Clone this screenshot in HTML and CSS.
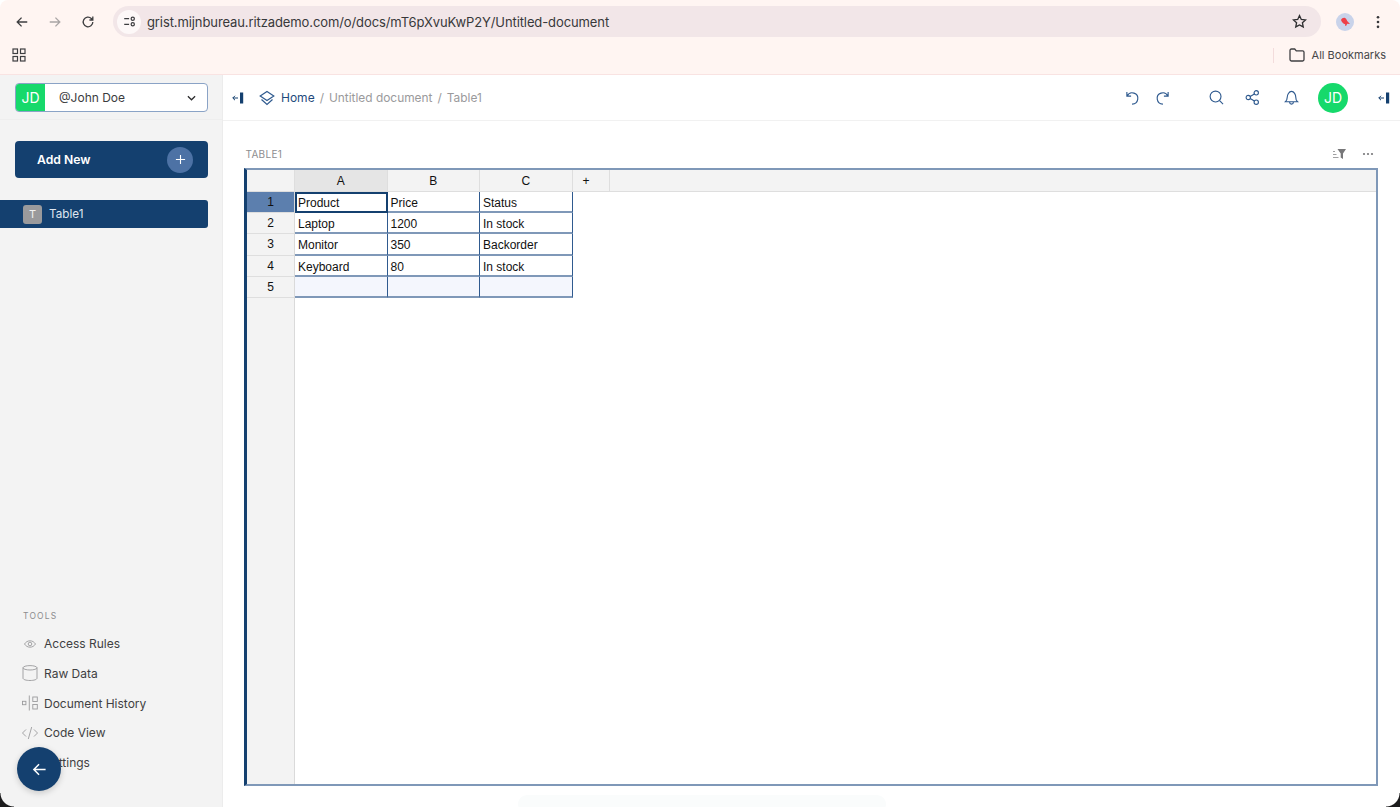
FILE: index.html
```html
<!DOCTYPE html>
<html lang="en">
<head>
<meta charset="utf-8">
<title>Untitled document - Grist</title>
<link rel="stylesheet" href="styles.css">
</head>
<body>
<div class="window">
  <header class="chrome">
    <div class="toolbar">
      <div class="nav">
        <svg class="nav-icon" viewBox="0 0 16 16"><path d="M14 8H2.500M7.500 3 2.500 8l5 5"/></svg>
        <svg class="nav-icon faded" viewBox="0 0 16 16"><path d="M2 8h11.500M8.500 3l5 5-5 5"/></svg>
        <svg class="nav-icon" viewBox="0 0 16 16"><path d="M13.500 8A5.500 5.500 0 1 1 11.800 4L13.500 5.700M13.500 1.800v3.900H9.600"/></svg>
      </div>
      <div class="omnibox">
        <span class="site-chip">
          <svg viewBox="0 0 16 16"><path d="M1.500 4.500h6M1.500 11.500h6"/><circle cx="12" cy="4.500" r="2"/><circle cx="12" cy="11.500" r="2"/></svg>
        </span>
        <span class="url">grist.mijnbureau.ritzademo.com/o/docs/mT6pXvuKwP2Y/Untitled-document</span>
        <svg class="star" viewBox="0 0 16 16"><path d="M8 1.700l1.900 4.100 4.500.5-3.300 3 .9 4.500L8 11.600l-4 2.200.9-4.500-3.300-3 4.500-.5z"/></svg>
      </div>
      <span class="profile">
        <svg viewBox="0 0 18 18"><path d="M5 7c.8-1.700 2.400-2.500 4-2 1.300.4 1.600 1.800 2.200 2.900L14 11l-2.800-.3-1 2H9l.2-1.500C7.300 11 5.700 9 5 7z"/></svg>
      </span>
      <svg class="kebab" viewBox="0 0 4 16"><circle cx="2" cy="2.500" r="1.500"/><circle cx="2" cy="8" r="1.500"/><circle cx="2" cy="13.500" r="1.500"/></svg>
    </div>
    <div class="bookmarks">
      <svg class="apps" viewBox="0 0 14 14"><rect x="1" y="1" width="4.500" height="4.500"/><rect x="8.500" y="1" width="4.500" height="4.500"/><rect x="1" y="8.500" width="4.500" height="4.500"/><rect x="8.500" y="8.500" width="4.500" height="4.500"/></svg>
      <span class="bm-divider"></span>
      <svg class="folder" viewBox="0 0 16 14"><path d="M1 2.500C1 1.700 1.600 1 2.400 1h3.300l1.600 1.900h6.300c.8 0 1.400.6 1.400 1.400v7.300c0 .8-.6 1.400-1.400 1.400H2.400c-.8 0-1.400-.6-1.400-1.400z"/></svg>
      <span class="bm-label">All Bookmarks</span>
    </div>
  </header>

  <div class="app">
    <aside class="sidebar">
      <div class="account-bar">
        <div class="account">
          <span class="account-badge">JD</span>
          <span class="account-name">@John Doe</span>
          <svg class="caret" viewBox="0 0 10 6"><path d="M1 1l4 4 4-4"/></svg>
        </div>
      </div>
      <button class="add-new">
        <span>Add New</span>
        <span class="add-plus"><svg viewBox="0 0 12 12"><path d="M6 1v10M1 6h10"/></svg></span>
      </button>
      <div class="page-item">
        <span class="page-badge">T</span>
        <span>Table1</span>
      </div>
      <div class="tools">
        <div class="tools-title">TOOLS</div>
        <div class="tool">
          <svg viewBox="0 0 16 16"><path d="M2.500 8C3.800 6 5.700 4.800 8 4.800s4.200 1.200 5.500 3.200c-1.300 2-3.200 3.200-5.500 3.200S3.800 10 2.500 8z"/><circle cx="8" cy="8" r="1.800"/></svg>
          <span>Access Rules</span>
        </div>
        <div class="tool">
          <svg viewBox="0 0 16 16"><ellipse cx="8" cy="2.800" rx="7" ry="2.200"/><path d="M1 2.800v10.400c0 1.300 3 2.300 7 2.300s7-1 7-2.300V2.800"/></svg>
          <span>Raw Data</span>
        </div>
        <div class="tool">
          <svg viewBox="0 0 16 16"><rect x=".5" y="6.300" width="3.400" height="3.400"/><rect x="10.800" y="2" width="4.500" height="4.500"/><rect x="10.800" y="9.500" width="4.500" height="4.500"/><path d="M7.300 .5v15"/></svg>
          <span>Document History</span>
        </div>
        <div class="tool">
          <svg viewBox="0 0 16 16"><path d="M4 4.500.5 8 4 11.500M12 4.500 15.500 8 12 11.500M9.700 2 6.300 14"/></svg>
          <span>Code View</span>
        </div>
        <div class="tool">
          <svg viewBox="0 0 16 16"><circle cx="8" cy="8" r="5"/></svg>
          <span>Settings</span>
        </div>
      </div>
    </aside>

    <main class="content">
      <div class="topbar">
        <svg class="collapse" viewBox="0 0 12 12"><path class="thin" d="M6 6H.8M3 3.800.8 6 3 8.200"/><rect x="8" y="0.500" width="3.200" height="11"/></svg>
        <svg class="layers" viewBox="0 0 16 16"><path d="M8 1.500 14.800 6 8 10.500 1.200 6z"/><path d="M2.500 9.500 8 14.500l5.500-5"/></svg>
        <span class="crumb-home">Home</span>
        <span class="crumb-sep">/</span>
        <span class="crumb">Untitled document</span>
        <span class="crumb-sep">/</span>
        <span class="crumb">Table1</span>
        <div class="actions">
          <svg class="action undo" viewBox="0 0 16 16"><path d="M2 2v4.500h4.500M2.300 6.300A6 6 0 1 1 7.500 15"/></svg>
          <svg class="action redo" viewBox="0 0 16 16"><path d="M14 2v4.500H9.500M13.700 6.300A6 6 0 1 0 8.500 15"/></svg>
          <svg class="action search" viewBox="0 0 16 16"><circle cx="7" cy="7" r="5.800"/><path d="M11.300 11.300 15 15"/></svg>
          <svg class="action share" viewBox="0 0 16 16"><circle cx="3.500" cy="8" r="2.300"/><circle cx="12" cy="3" r="2.300"/><circle cx="12" cy="13" r="2.300"/><path d="M5.500 6.900 10 4.200M5.500 9.100l4.500 2.700"/></svg>
          <svg class="action bell" viewBox="0 0 16 16"><path d="M1.500 12.500c1-1 1.900-2 1.900-4.500S5.300 1.500 8 1.500 12.600 5 12.600 8s.9 3.500 1.900 4.500zM6 13c0 2.700 4 2.700 4 0"/></svg>
          <span class="avatar">JD</span>
          <svg class="collapse right" viewBox="0 0 12 12"><path class="thin" d="M6 6H.8M3 3.800.8 6 3 8.200"/><rect x="8" y="0.500" width="3.200" height="11"/></svg>
        </div>
      </div>

      <section class="widget">
        <div class="widget-head">
          <span class="widget-title">TABLE1</span>
          <svg class="sort-filter" viewBox="0 0 14 12"><path class="lines" d="M1 3.500h2M1 6.500h3.500M1 9.500h5.500"/><path class="fill" d="M5.500 1H14L11 5.500V11L8.700 9.500v-4z"/></svg>
          <svg class="dots" viewBox="0 0 12 4"><circle cx="2" cy="2" r="1.100"/><circle cx="6" cy="2" r="1.100"/><circle cx="10" cy="2" r="1.100"/></svg>
        </div>
        <div class="grid-frame">
          <div class="grid-head">
            <span class="corner"></span>
            <span class="col selected">A</span>
            <span class="col">B</span>
            <span class="col">C</span>
            <span class="col plus">+</span>
            <span class="col-rest"></span>
          </div>
          <div class="grid-body">
            <div class="row-heads">
              <span class="row-num active">1</span>
              <span class="row-num">2</span>
              <span class="row-num">3</span>
              <span class="row-num">4</span>
              <span class="row-num">5</span>
            </div>
            <div class="cells">
              <span class="cell cursor">Product</span><span class="cell">Price</span><span class="cell">Status</span>
              <span class="cell">Laptop</span><span class="cell">1200</span><span class="cell">In stock</span>
              <span class="cell">Monitor</span><span class="cell">350</span><span class="cell">Backorder</span>
              <span class="cell">Keyboard</span><span class="cell">80</span><span class="cell">In stock</span>
              <span class="cell new"></span><span class="cell new"></span><span class="cell new"></span>
            </div>
          </div>
        </div>
      </section>
    </main>
  </div>

  <button class="fab"><svg viewBox="0 0 16 16"><path d="M14.500 8H2M7.500 2.500 2 8l5.500 5.500"/></svg></button>
  <span class="bottom-glow"></span>
  <span class="round bl"></span>
  <span class="round br"></span>
</div>
</body>
</html>
```
FILE: styles.css
```css
* { box-sizing: border-box; }
html, body { margin: 0; height: 100%; background: #fff; }
body { font-family: Inter, "Liberation Sans", sans-serif; overflow: hidden; }
svg { display: block; flex: none; fill: none; }

.window { position: relative; width: 1400px; height: 807px; overflow: hidden; display: flex; flex-direction: column; }

/* Browser chrome */
.chrome { height: 75px; flex: none; background: #fff5f2; border-bottom: 1px solid #f9e3e2; border-radius: 8px 8px 0 0; }
.toolbar { height: 43px; display: flex; align-items: center; padding: 0 14px 0 15px; }
.nav { display: flex; gap: 19px; width: 98px; flex: none; align-items: center; }
.nav-icon { width: 14px; height: 14px; stroke: #3e3e40; stroke-width: 1.5; }
.nav-icon.faded { stroke: #a9a5a5; }
.omnibox { flex: none; width: 1208px; height: 31px; border-radius: 16px; background: #f2e6e8; display: flex; align-items: center; padding-left: 4px; padding-right: 14px; }
.site-chip { width: 24px; height: 24px; border-radius: 50%; background: #fdf8f8; display: flex; align-items: center; justify-content: center; flex: none; }
.site-chip svg { width: 13px; height: 13px; stroke: #3d3d40; stroke-width: 1.5; }
.url { margin-left: 6px; font-size: 13px; color: #38383a; letter-spacing: -0.1px; white-space: nowrap; }
.star { width: 15px; height: 15px; margin-left: auto; stroke: #2f2f31; stroke-width: 1.4; }
.profile { width: 18px; height: 18px; border-radius: 50%; background: #c9d3ea; margin-left: 15px; flex: none; }
.profile svg { width: 18px; height: 18px; fill: #ee3f47; }
.kebab { width: 4px; height: 14px; margin-left: 22px; fill: #37373a; }

.bookmarks { height: 31px; display: flex; align-items: center; padding: 0 14px 7px 12px; }
.apps { width: 14px; height: 14px; stroke: #3f3f42; stroke-width: 1.2; }
.bm-divider { width: 1px; height: 15px; background: #f3dcdc; margin-left: auto; }
.folder { width: 16px; height: 14px; margin-left: 15px; stroke: #3f3f42; stroke-width: 1.3; }
.bm-label { margin-left: 7px; font-size: 11px; color: #474749; white-space: nowrap; }

/* App */
.app { flex: 1; display: flex; min-height: 0; }
.sidebar { width: 223px; flex: none; background: #f3f3f3; border-right: 1px solid #ececec; display: flex; flex-direction: column; }
.account-bar { height: 45px; flex: none; padding: 8px 15px 0; border-bottom: 1px solid #eeeeee; }
.account { width: 193px; height: 29px; background: #fff; border: 1px solid #8aa3c6; border-radius: 4px; display: flex; align-items: center; overflow: hidden; }
.account-badge { width: 29px; height: 100%; background: #16d96b; color: #fff; font-size: 14px; display: flex; align-items: center; justify-content: center; flex: none; }
.account-name { margin-left: 14px; font-size: 12px; color: #3b3b3e; }
.caret { width: 9px; height: 6px; margin-left: auto; margin-right: 11px; stroke: #2c2c2e; stroke-width: 1.4; }

.add-new { margin: 21px 15px 0; width: 193px; height: 37px; flex: none; background: #14406f; border: 0; border-radius: 4px; color: #fff; font: 600 12.200px Inter, sans-serif; display: flex; align-items: center; justify-content: space-between; padding: 0 15px 0 22px; }
.add-plus { width: 26px; height: 26px; border-radius: 50%; background: #4d72a5; display: flex; align-items: center; justify-content: center; }
.add-plus svg { width: 11px; height: 11px; stroke: #fff; stroke-width: 1.2; }

.page-item { margin-top: 22px; width: 208px; height: 28px; flex: none; background: #14406f; border-radius: 0 3px 3px 0; color: #dfe6ef; font-size: 11.700px; display: flex; align-items: center; padding-left: 23px; gap: 7px; }
.page-badge { width: 19px; height: 19px; border-radius: 3px; background: #9a9a9c; color: #f1f1f1; display: flex; align-items: center; justify-content: center; font-size: 11px; }

.tools { margin-top: auto; padding: 0 0 30px 22px; }
.tools-title { font-size: 8.500px; letter-spacing: 0.14em; color: #8c8c8e; height: 15px; margin: 0 0 6px 1px; display: flex; align-items: center; }
.tool { height: 29.600px; display: flex; align-items: center; gap: 6px; font-size: 12px; color: #3f3f42; }
.tool svg { width: 16px; height: 16px; stroke: #9b9b9d; stroke-width: 0.9; }

.content { flex: 1; min-width: 0; display: flex; flex-direction: column; background: #fff; }
.topbar { height: 46px; flex: none; border-bottom: 1px solid #f1f1f1; display: flex; align-items: center; padding: 0 10px 0 9px; }
.collapse { width: 12px; height: 12px; fill: #14406f; }
.collapse .thin { fill: none; stroke: #14406f; stroke-width: 1; }
.layers { width: 16px; height: 16px; margin-left: 15px; stroke: #2f5a8f; stroke-width: 1.2; }
.crumb-home { margin-left: 6px; font-size: 12px; color: #1f4a7c; }
.crumb-sep { margin: 0 5px; font-size: 12px; color: #9a9a9c; }
.crumb { font-size: 11.900px; color: #9a9a9c; }
.actions { margin-left: auto; display: flex; align-items: center; }
.action { width: 15px; height: 15px; stroke: #2f5a8f; stroke-width: 1.2; }
.redo { margin-left: 15px; }
.search { margin-left: 39px; }
.share { margin-left: 21px; }
.bell { margin-left: 24px; }
.avatar { width: 30px; height: 30px; border-radius: 50%; background: #16d96b; color: #fff; font-size: 14px; display: flex; align-items: center; justify-content: center; margin-left: 19px; }
.collapse.right { margin-left: 30px; }

.widget { flex: 1; display: flex; flex-direction: column; padding: 22px 22px 21px 21px; min-height: 0; }
.widget-head { height: 25px; flex: none; display: flex; align-items: center; padding: 0 4px 3px 1.500px; }
.widget-title { font-size: 10px; letter-spacing: 0.03em; color: #8d8d8f; }
.sort-filter { width: 14px; height: 12px; margin-left: auto; }
.sort-filter .lines { stroke: #a0a0a2; stroke-width: 1; }
.sort-filter .fill { fill: #777779; }
.dots { width: 12px; height: 4px; margin-left: 16px; fill: #77777a; }

.grid-frame { flex: 1; min-height: 0; border: 2px solid #7f98b8; border-left: 3px solid #14406f; display: flex; flex-direction: column; font-family: "Liberation Sans", Arial, sans-serif; color: #111; }
.grid-head { height: 22px; flex: none; display: flex; background: #f3f3f3; border-bottom: 1px solid #dedede; font-size: 12px; }
.corner { width: 48px; flex: none; border-right: 1px solid #dedede; }
.col { width: 92.500px; flex: none; display: flex; align-items: center; justify-content: center; border-right: 1px solid #dedede; }
.col.selected { background: #e5e5e5; }
.col.plus { width: 37px; justify-content: flex-start; padding-left: 10px; }
.col-rest { flex: 1; }
.grid-body { flex: 1; display: flex; min-height: 0; }
.row-heads { width: 48px; flex: none; background: #f3f3f3; border-right: 1px solid #dadada; display: flex; flex-direction: column; }
.row-num { height: 21.200px; flex: none; display: flex; align-items: center; justify-content: center; border-bottom: 1px solid #dedede; font-size: 12px; }
.row-num.active { background: #5c7fae; }
.cells { display: grid; grid-template-columns: repeat(3, 92.500px); grid-auto-rows: 21.200px; align-content: start; }
.cell { border-right: 1px solid #2f5a8f; border-bottom: 2px solid #7f98b8; font-size: 12px; line-height: 18px; padding: 2px 0 0 3px; white-space: nowrap; }
.cell.new { background: #f4f6fd; }
.cell.cursor { border: 0; box-shadow: inset 0 0 0 2px #14406f; }

.fab { position: absolute; left: 17px; top: 747px; width: 44px; height: 44px; border-radius: 50%; border: 0; background: #14406f; box-shadow: 0 2px 6px rgba(0,0,0,.18); display: flex; align-items: center; justify-content: center; padding: 0; }
.fab svg { width: 15px; height: 15px; stroke: #fff; stroke-width: 1.6; }

.bottom-glow { position: absolute; left: 518px; bottom: -6px; width: 368px; height: 18px; border-radius: 12px; background: #fafcfc; }
.round { position: absolute; bottom: 0; width: 14px; height: 14px; }
.round.bl { left: 0; background: radial-gradient(circle at 100% 0, transparent 13px, #1b1b1c 14px); }
.round.br { right: 0; background: radial-gradient(circle at 0 0, transparent 13px, #1b1b1c 14px); }
```
